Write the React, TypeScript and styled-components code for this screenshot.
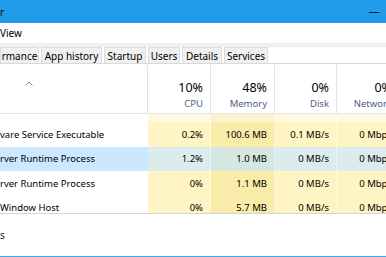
import styled, { createGlobalStyle } from "styled-components";

const GlobalStyle = createGlobalStyle`
  html, body {
    margin: 0;
    padding: 0;
    background: #ffffff;
  }
  body {
    font-family: "Noto Sans", "Open Sans", sans-serif;
  }
`;

const Window = styled.div`
  width: 386px;
  height: 257px;
  overflow: hidden;
  display: flex;
  flex-direction: column;
  background: #ffffff;
  border-bottom: 1px solid #3aaaf0;
  box-sizing: border-box;
`;

const TitleBar = styled.div`
  height: 23px;
  flex: none;
  display: flex;
  align-items: center;
  justify-content: space-between;
  background: #1f9bea;
  color: #101010;
  font-size: 10px;
`;

const TitleText = styled.span`
  padding-left: 0;
`;

const MinGlyph = styled.span`
  width: 10px;
  height: 1px;
  margin-right: 7px;
  margin-top: 2px;
  background: #1a1a1a;
`;

const MenuBar = styled.div`
  height: 20px;
  flex: none;
  display: flex;
  align-items: center;
  font-size: 10px;
  color: #000;
`;

const Strip = styled.div`
  height: 4px;
  flex: none;
  background: #f0f0f0;
`;

const TabStrip = styled.div`
  height: 16px;
  flex: none;
  display: flex;
  gap: 2px;
  border-bottom: 1px solid #d9d9d9;
`;

const Tab = styled.div<{ $w: number }>`
  width: ${(p) => p.$w}px;
  flex: none;
  box-sizing: border-box;
  display: flex;
  align-items: center;
  justify-content: center;
  background: #f0f0f0;
  border: 1px solid #dcdcdc;
  border-bottom: none;
  font-size: 10px;
  color: #000;
  white-space: nowrap;
  overflow: hidden;
`;

const cols = "148px 63px 64px 62px 63px";

const Header = styled.div`
  height: 50px;
  flex: none;
  display: grid;
  grid-template-columns: ${cols};
  box-sizing: border-box;
  border-bottom: 1px solid #e5e5e5;
`;

const HeaderCell = styled.div`
  position: relative;
  display: flex;
  flex-direction: column;
  align-items: flex-end;
  justify-content: flex-end;
  padding: 0 7px 3px 0;
  gap: 1px;
  border-right: 1px solid #e3e3e3;
  margin-top: 1px;
`;

const SortArrow = styled.svg`
  position: absolute;
  left: 25px;
  top: 16px;
`;

const Pct = styled.span`
  font-size: 12.5px;
  line-height: 16px;
  color: #000;
`;

const Label = styled.span`
  font-size: 9.5px;
  line-height: 13px;
  color: #4d6082;
`;

const Body = styled.div`
  height: 100px;
  flex: none;
  overflow: hidden;
  box-sizing: border-box;
  border-bottom: 1px solid #d5d5d5;
`;

const Row = styled.div<{ $h?: number }>`
  height: ${(p) => p.$h ?? 24.5}px;
  display: grid;
  grid-template-columns: ${cols};
  font-size: 9.5px;
  color: #000;
`;

const NameCell = styled.div<{ $sel?: boolean }>`
  display: flex;
  align-items: center;
  white-space: nowrap;
  overflow: hidden;
  background: ${(p) => (p.$sel ? "#cce8ff" : "#ffffff")};
  border-right: 1px solid ${(p) => (p.$sel ? "#cce8ff" : "#ffffff")};
`;

type Tone = "low" | "mid" | "faint" | "faintMid" | "sel" | "selMid";

const toneColors: Record<Tone, string> = {
  low: "#fff4c4",
  mid: "#f9eca8",
  faint: "#fff8df",
  faintMid: "#fdf2cb",
  sel: "#dcebeb",
  selMid: "#d6e6e0",
};

const ValueCell = styled.div<{ $tone: Tone }>`
  display: flex;
  align-items: center;
  justify-content: flex-end;
  padding-right: 7px;
  white-space: nowrap;
  background: ${(p) => toneColors[p.$tone]};
  border-right: 1px solid rgba(255, 255, 255, 0.45);
`;

const Footer = styled.div`
  flex: 1;
  display: flex;
  align-items: center;
  font-size: 10px;
  color: #1a1a1a;
`;

type Proc = {
  name: string;
  cpu: string;
  mem: string;
  disk: string;
  net: string;
  sel?: boolean;
};

const procs: Proc[] = [
  { name: "vare Service Executable", cpu: "0.2%", mem: "100.6 MB", disk: "0.1 MB/s", net: "0 Mbps" },
  { name: "rver Runtime Process", cpu: "1.2%", mem: "1.0 MB", disk: "0 MB/s", net: "0 Mbps", sel: true },
  { name: "rver Runtime Process", cpu: "0%", mem: "1.1 MB", disk: "0 MB/s", net: "0 Mbps" },
  { name: "Window Host", cpu: "0%", mem: "5.7 MB", disk: "0 MB/s", net: "0 Mbps" },
];

const tabs: [string, number][] = [
  ["rmance", 39],
  ["App history", 61],
  ["Startup", 42],
  ["Users", 32],
  ["Details", 40],
  ["Services", 44],
];

const App = () => (
  <>
    <GlobalStyle />
    <Window>
      <TitleBar>
        <TitleText>r</TitleText>
        <MinGlyph />
      </TitleBar>
      <MenuBar>View</MenuBar>
      <Strip />
      <TabStrip>
        {tabs.map(([t, w]) => (
          <Tab key={t} $w={w}>
            {t}
          </Tab>
        ))}
      </TabStrip>
      <Header>
        <HeaderCell>
          <SortArrow width="8" height="5" viewBox="0 0 8 5">
            <path d="M0.5 4.5 L4 1 L7.5 4.5" fill="none" stroke="#8a8a8a" strokeWidth="1" />
          </SortArrow>
        </HeaderCell>
        <HeaderCell>
          <Pct>10%</Pct>
          <Label>CPU</Label>
        </HeaderCell>
        <HeaderCell>
          <Pct>48%</Pct>
          <Label>Memory</Label>
        </HeaderCell>
        <HeaderCell>
          <Pct>0%</Pct>
          <Label>Disk</Label>
        </HeaderCell>
        <HeaderCell>
          <Pct>0%</Pct>
          <Label>Network</Label>
        </HeaderCell>
      </Header>
      <Body>
        <Row $h={8}>
          <NameCell />
          <ValueCell $tone="faint" />
          <ValueCell $tone="faintMid" />
          <ValueCell $tone="faint" />
          <ValueCell $tone="faint" />
        </Row>
        {procs.map((p, i) => (
          <Row key={i}>
            <NameCell $sel={p.sel}>{p.name}</NameCell>
            <ValueCell $tone={p.sel ? "sel" : "low"}>{p.cpu}</ValueCell>
            <ValueCell $tone={p.sel ? "selMid" : "mid"}>{p.mem}</ValueCell>
            <ValueCell $tone={p.sel ? "sel" : "low"}>{p.disk}</ValueCell>
            <ValueCell $tone={p.sel ? "sel" : "low"}>{p.net}</ValueCell>
          </Row>
        ))}
      </Body>
      <Footer>s</Footer>
    </Window>
  </>
);

export default App;
